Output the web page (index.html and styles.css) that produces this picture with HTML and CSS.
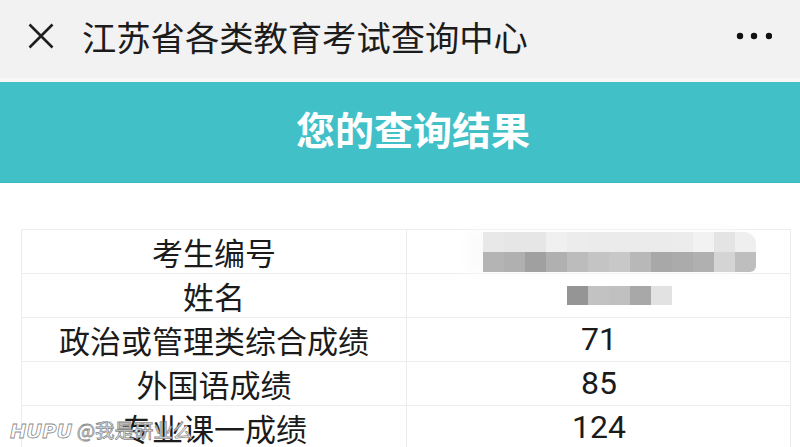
FILE: index.html
```html
<!DOCTYPE html>
<html lang="zh">
<head>
<meta charset="utf-8">
<link rel="stylesheet" href="styles.css">
</head>
<body>
<div class="topbar">
  <svg class="close" width="26" height="26" viewBox="0 0 26 26"><path d="M1.5 1.5 L24.5 24.5 M24.5 1.5 L1.5 24.5" stroke="#1f1f1f" stroke-width="2.6" fill="none"/></svg>
  <div class="apptitle">江苏省各类教育考试查询中心</div>
  <svg class="more" width="36" height="8" viewBox="0 0 36 8"><circle cx="4" cy="4" r="3.2" fill="#111"/><circle cx="18" cy="4" r="3.2" fill="#111"/><circle cx="33" cy="4" r="3.2" fill="#111"/></svg>
</div>
<div class="banner">您的查询结果</div>
<div class="content">
  <div class="table">
    <div class="row">
      <div class="cell">考生编号</div>
      <div class="cell blurcell">
        <div class="mosaic first">
          <div class="mrow">
            <span class="blk" style="background:#e8e8e8"></span><span class="blk" style="background:#e6e6e6"></span><span class="blk" style="background:#e6e6e6"></span><span class="blk" style="background:#f0f0f0"></span><span class="blk" style="background:#ececec"></span><span class="blk" style="background:#ebebeb"></span><span class="blk" style="background:#ebebeb"></span><span class="blk" style="background:#ebebeb"></span><span class="blk" style="background:#ebebeb"></span><span class="blk" style="background:#ececec"></span><span class="blk" style="background:#f2f2f2"></span><span class="blk" style="background:#e4e4e4"></span><span class="blk" style="background:#efefef"></span>
          </div>
          <div class="mrow">
            <span class="blk" style="background:#b4b4b4"></span><span class="blk" style="background:#b0b0b0"></span><span class="blk" style="background:#a0a0a0"></span><span class="blk" style="background:#b0b0b0"></span><span class="blk" style="background:#bcbcbc"></span><span class="blk" style="background:#c4c4c4"></span><span class="blk" style="background:#c8c8c8"></span><span class="blk" style="background:#b8b8b8"></span><span class="blk" style="background:#a8a8a8"></span><span class="blk" style="background:#ababab"></span><span class="blk" style="background:#b0b0b0"></span><span class="blk" style="background:#d4d4d4"></span><span class="blk" style="background:#bebebe"></span>
          </div>
        </div>
      </div>
    </div>
    <div class="row">
      <div class="cell">姓名</div>
      <div class="cell blurcell">
        <div class="mosaic second">
          <div class="mrow">
            <span class="blk" style="background:#959595"></span><span class="blk" style="background:#c2c2c2"></span><span class="blk" style="background:#c0c0c0"></span><span class="blk" style="background:#a8a8a8"></span><span class="blk" style="background:#e2e2e2"></span>
          </div>
        </div>
      </div>
    </div>
    <div class="row">
      <div class="cell">政治或管理类综合成绩</div>
      <div class="cell num">71</div>
    </div>
    <div class="row">
      <div class="cell">外国语成绩</div>
      <div class="cell num">85</div>
    </div>
    <div class="row">
      <div class="cell">专业课一成绩</div>
      <div class="cell num">124</div>
    </div>
  </div>
</div>
<div class="watermark"><span class="wm-brand">HUPU</span> @我是研业么</div>
</body>
</html>
```
FILE: styles.css
```css
html, body {
  margin: 0;
  padding: 0;
}
body {
  width: 800px;
  height: 447px;
  overflow: hidden;
  background: #ffffff;
  font-family: "Noto Sans CJK SC", "Noto Sans", sans-serif;
  color: #1b1b1b;
  position: relative;
}
.topbar {
  height: 72px;
  padding-bottom: 6px;
  border-bottom: 4px solid #f7f7f7;
  background: #f2f2f2;
  display: flex;
  align-items: center;
}
.close {
  margin-left: 28px;
  flex: none;
}
.apptitle {
  margin-left: 28px;
  font-size: 34.3px;
  line-height: 40px;
  color: #1c1c1c;
  flex: 1;
}
.more {
  margin-right: 28px;
  flex: none;
}
.banner {
  height: 101px;
  background: #42c0c8;
  color: #ffffff;
  font-size: 39px;
  font-weight: 700;
  display: flex;
  align-items: center;
  justify-content: center;
  padding-bottom: 9px;
  padding-left: 26px;
  box-sizing: border-box;
  border-bottom: 1px solid #3cb9c1;
}
.content {
  padding: 46px 9px 0 21px;
}
.table {
  width: 770px;
  border: 1px solid #ececec;
  border-bottom: none;
  box-sizing: border-box;
}
.row {
  display: grid;
  grid-template-columns: 384px 385px;
  height: 44px;
  box-sizing: border-box;
  border-bottom: 1px solid #ececec;
}
.cell {
  display: flex;
  align-items: center;
  justify-content: center;
  font-size: 31px;
  line-height: 43px;
  color: #1b1b1b;
}
.cell + .cell {
  border-left: 1px solid #ececec;
}
.num {
  font-family: "Roboto", "Noto Sans CJK SC", sans-serif;
  font-size: 32px;
}
.blurcell {
  justify-content: flex-start;
  position: relative;
}
.mosaic {
  display: flex;
  flex-direction: column;
}
.mosaic.first {
  margin-left: 76px;
  margin-top: 1px;
  box-shadow: -14px 0 14px 2px #fbfbfb;
  border-radius: 0 12px 6px 0;
  overflow: hidden;
}
.mosaic.second {
  margin-left: 160px;
  margin-top: 0;
}
.mrow {
  display: flex;
  height: 20px;
}
.mosaic.second .mrow {
  height: 19px;
}
.blk {
  width: 21px;
  height: 100%;
  display: block;
}
.watermark {
  position: absolute;
  left: 10px;
  top: 417px;
  font-size: 19.5px;
  line-height: 26px;
  color: #ffffff;
  -webkit-text-stroke: 0.8px #8a8a8a;
  font-family: "Noto Sans CJK SC", sans-serif;
}
.wm-brand {
  font-family: "DejaVu Sans", sans-serif;
  font-style: italic;
  font-weight: 700;
  letter-spacing: 0;
}
```
